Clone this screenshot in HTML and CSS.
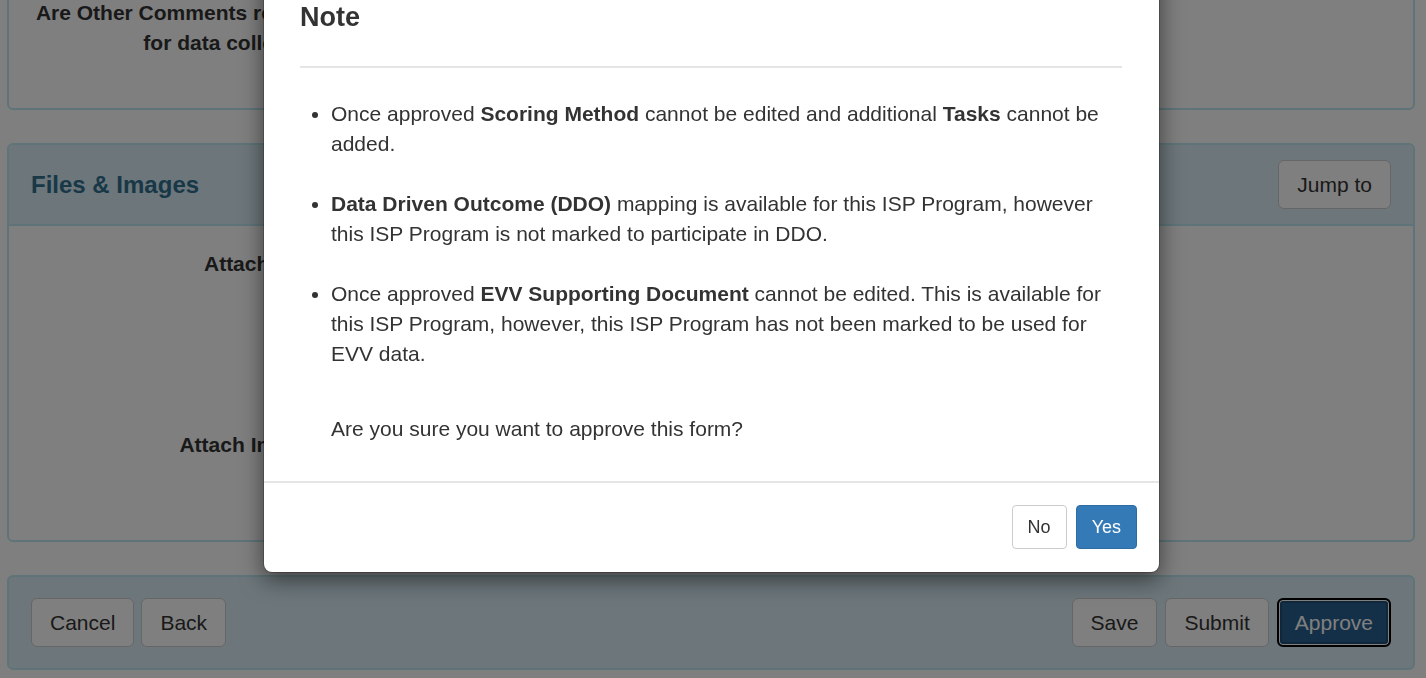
FILE: index.html
```html
<!DOCTYPE html>
<html lang="en">
<head>
<meta charset="utf-8">
<title>Approve ISP Program</title>
<link rel="stylesheet" href="styles.css">
</head>
<body>
<div class="page">
  <section class="panel panel-plain">
    <div class="form-row comments-row">
      <label class="form-label">Are Other Comments required for data collection?</label>
      <div class="form-field">Yes</div>
    </div>
  </section>

  <section class="panel panel-files">
    <div class="panel-heading">
      <h3 class="panel-title">Files &amp; Images</h3>
      <button class="btn btn-default" type="button">Jump to</button>
    </div>
    <div class="panel-body">
      <div class="form-row attach-row attach-files">
        <label class="form-label">Attach Files</label>
        <div class="form-field"></div>
      </div>
      <div class="form-row attach-row">
        <label class="form-label">Attach Images</label>
        <div class="form-field"></div>
      </div>
    </div>
  </section>

  <section class="panel panel-actions">
    <div class="actions-left">
      <button class="btn btn-default" type="button">Cancel</button>
      <button class="btn btn-default" type="button">Back</button>
    </div>
    <div class="actions-right">
      <button class="btn btn-default" type="button">Save</button>
      <button class="btn btn-default" type="button">Submit</button>
      <button class="btn btn-approve" type="button">Approve</button>
    </div>
  </section>
</div>

<div class="modal-backdrop"></div>

<div class="modal" role="dialog">
  <div class="modal-header">
    <h4 class="modal-title">Note</h4>
  </div>
  <div class="modal-body">
    <ul class="note-list">
      <li>Once approved <strong>Scoring Method</strong> cannot be edited and additional <strong>Tasks</strong> cannot be added.</li>
      <li><strong>Data Driven Outcome (DDO)</strong> mapping is available for this ISP Program, however this ISP Program is not marked to participate in DDO.</li>
      <li>Once approved <strong>EVV Supporting Document</strong> cannot be edited. This is available for this ISP Program, however, this ISP Program has not been marked to be used for EVV data.</li>
    </ul>
    <p class="confirm">Are you sure you want to approve this form?</p>
  </div>
  <div class="modal-footer">
    <button class="btn-sm btn-no" type="button">No</button>
    <button class="btn-sm btn-yes" type="button">Yes</button>
  </div>
</div>
</body>
</html>
```

FILE: styles.css
```css
* {
  box-sizing: border-box;
}

html, body {
  margin: 0;
  padding: 0;
  background: #ffffff;
  overflow: hidden;
}

body {
  font-family: "Liberation Sans", Arial, Helvetica, sans-serif;
  font-size: 21px;
  line-height: 30px;
  color: #333333;
}

.page {
  padding: 0 11px 0 7px;
  margin-top: -40px;
}

.panel {
  border: 2px solid #bce8f1;
  border-radius: 6px;
  background: #ffffff;
  margin-bottom: 33px;
}

.panel-plain {
  padding: 36px 0 50px 0;
}

.form-row {
  display: grid;
  grid-template-columns: 328px 1fr;
}

.form-label {
  display: block;
  font-weight: bold;
  text-align: right;
}

.form-field {
  padding-left: 22px;
  color: #333333;
}

.comments-row .form-field {
  visibility: hidden;
}

.panel-files .form-row {
  grid-template-columns: 314px 1fr;
}

.panel-heading {
  display: flex;
  align-items: center;
  justify-content: space-between;
  background: #d9edf7;
  border-bottom: 2px solid #bce8f1;
  border-radius: 4px 4px 0 0;
  padding: 15px 22px 15px 22px;
}

.panel-title {
  margin: 0;
  font-size: 24px;
  line-height: 30px;
  font-weight: bold;
  color: #31708f;
}

.panel-body {
  padding: 23px 0 80px 0;
}

.attach-files {
  min-height: 181px;
}

.panel-actions {
  display: flex;
  justify-content: space-between;
  align-items: center;
  background: #d9edf7;
  padding: 21px 22px;
}

.actions-left,
.actions-right {
  display: flex;
  gap: 7px;
}

.actions-right {
  gap: 8px;
}

.btn {
  font-family: inherit;
  font-size: 21px;
  line-height: 30px;
  padding: 8.5px 18px;
  border: 1px solid #cccccc;
  border-radius: 6px;
  background: #ffffff;
  color: #333333;
  cursor: pointer;
}

.btn-approve {
  font-family: inherit;
  font-size: 21px;
  line-height: 30px;
  padding: 7.5px 16px;
  border: 2px solid #000000;
  border-radius: 6px;
  background: #286090;
  color: #ffffff;
  box-shadow: inset 0 0 0 1px #ffffff, inset 0 0 0 3px #204d74;
}

.modal-backdrop {
  position: fixed;
  inset: 0;
  background: rgba(0, 0, 0, 0.5);
}

.modal {
  position: absolute;
  top: -40px;
  left: 263px;
  width: 897px;
  background: #ffffff;
  border: 1px solid rgba(0, 0, 0, 0.2);
  border-radius: 9px;
  box-shadow: 0 7px 22px rgba(0, 0, 0, 0.5);
  background-clip: padding-box;
}

.modal-header {
  margin: 0 37px 0 36px;
  padding: 41px 0 34px 0;
  border-bottom: 2px solid #e5e5e5;
}

.modal-title {
  margin: 0;
  font-size: 27px;
  line-height: 30px;
  font-weight: bold;
  color: #333333;
}

.modal-body {
  padding: 31px 37px 37px 36px;
}

.note-list {
  margin: 0;
  padding-left: 31px;
}

.note-list li {
  margin-bottom: 30px;
}

.note-list li:last-child {
  margin-bottom: 0;
}

.confirm {
  margin: 45px 0 0 0;
  padding-left: 31px;
}

.modal-footer {
  display: flex;
  justify-content: flex-end;
  gap: 9px;
  border-top: 2px solid #e5e5e5;
  padding: 22px 22px 23px 22px;
}

.btn-sm {
  font-family: inherit;
  font-size: 18px;
  line-height: 27px;
  padding: 7.5px 15px;
  border-radius: 4px;
  cursor: pointer;
}

.btn-no {
  background: #ffffff;
  border: 1px solid #cccccc;
  color: #333333;
}

.btn-yes {
  background: #337ab7;
  border: 1px solid #2e6da4;
  color: #ffffff;
}
```
